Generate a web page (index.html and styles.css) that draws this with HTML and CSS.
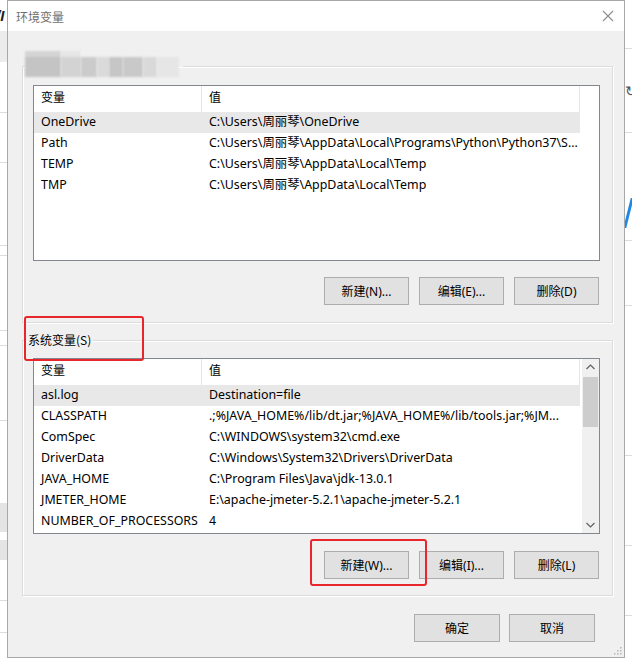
FILE: index.html
```html
<!DOCTYPE html>
<html lang="zh-CN">
<head>
<meta charset="utf-8">
<title>环境变量</title>
<link rel="stylesheet" href="styles.css">
</head>
<body>
<div class="screen">
  <div class="bg-left">
    <span class="bg-glyph">/I</span>
  </div>

  <div class="dialog">
    <div class="titlebar">
      <span class="title">环境变量</span>
      <svg class="close" width="12" height="12" viewBox="0 0 12 12" aria-label="关闭">
        <path d="M1 1 L11 11 M11 1 L1 11" stroke="#8c8c8c" stroke-width="1.1" fill="none"/>
      </svg>
    </div>

    <div class="dialog-body">
      <fieldset class="group group-user">
        <legend class="blur-label">
          <span class="bl b1"></span><span class="bl b2"></span><span class="bl b3"></span><span class="bl b4"></span><span class="bl b5"></span><span class="bl b6"></span><span class="bl b7"></span><span class="bl b8"></span>
        </legend>
        <div class="group-inner user-inner">
          <div class="list">
            <div class="list-main">
              <div class="cols head"><span class="cell">变量</span><span class="cell">值</span></div>
              <div class="cols row sel"><span class="cell">OneDrive</span><span class="cell">C:\Users\周丽琴\OneDrive</span></div>
              <div class="cols row"><span class="cell">Path</span><span class="cell">C:\Users\周丽琴\AppData\Local\Programs\Python\Python37\S...</span></div>
              <div class="cols row"><span class="cell">TEMP</span><span class="cell">C:\Users\周丽琴\AppData\Local\Temp</span></div>
              <div class="cols row"><span class="cell">TMP</span><span class="cell">C:\Users\周丽琴\AppData\Local\Temp</span></div>
            </div>
          </div>
          <div class="btn-row">
            <button class="btn">新建(N)...</button>
            <button class="btn">编辑(E)...</button>
            <button class="btn">删除(D)</button>
          </div>
        </div>
      </fieldset>

      <fieldset class="group group-sys">
        <legend class="group-title">系统变量(S)</legend>
        <div class="group-inner sys-inner">
          <div class="list">
            <div class="list-main">
              <div class="cols head"><span class="cell">变量</span><span class="cell">值</span></div>
              <div class="cols row sel"><span class="cell">asl.log</span><span class="cell">Destination=file</span></div>
              <div class="cols row"><span class="cell">CLASSPATH</span><span class="cell">.;%JAVA_HOME%/lib/dt.jar;%JAVA_HOME%/lib/tools.jar;%JM...</span></div>
              <div class="cols row"><span class="cell">ComSpec</span><span class="cell">C:\WINDOWS\system32\cmd.exe</span></div>
              <div class="cols row"><span class="cell">DriverData</span><span class="cell">C:\Windows\System32\Drivers\DriverData</span></div>
              <div class="cols row"><span class="cell">JAVA_HOME</span><span class="cell">C:\Program Files\Java\jdk-13.0.1</span></div>
              <div class="cols row"><span class="cell">JMETER_HOME</span><span class="cell">E:\apache-jmeter-5.2.1\apache-jmeter-5.2.1</span></div>
              <div class="cols row"><span class="cell">NUMBER_OF_PROCESSORS</span><span class="cell">4</span></div>
            </div>
            <div class="vscroll">
              <svg class="arrow" width="17" height="17" viewBox="0 0 17 17"><path d="M4.5 10 L8.5 6 L12.5 10" stroke="#606060" stroke-width="1.2" fill="none"/></svg>
              <div class="track"><div class="thumb"></div></div>
              <svg class="arrow" width="17" height="17" viewBox="0 0 17 17"><path d="M4.5 7 L8.5 11 L12.5 7" stroke="#606060" stroke-width="1.2" fill="none"/></svg>
            </div>
          </div>
          <div class="btn-row">
            <button class="btn">新建(W)...</button>
            <button class="btn">编辑(I)...</button>
            <button class="btn">删除(L)</button>
          </div>
        </div>
      </fieldset>

      <div class="actions">
        <button class="btn btn-wide">确定</button>
        <button class="btn btn-wide">取消</button>
      </div>
    </div>

    <svg class="grip" width="10" height="10" viewBox="0 0 10 10">
      <rect x="8" y="2" width="1.5" height="1.5" fill="#b5b5b5"/>
      <rect x="5" y="5" width="1.5" height="1.5" fill="#b5b5b5"/>
      <rect x="8" y="5" width="1.5" height="1.5" fill="#b5b5b5"/>
      <rect x="2" y="8" width="1.5" height="1.5" fill="#b5b5b5"/>
      <rect x="5" y="8" width="1.5" height="1.5" fill="#b5b5b5"/>
      <rect x="8" y="8" width="1.5" height="1.5" fill="#b5b5b5"/>
    </svg>
  </div>

  <div class="bg-right">
    <span class="bg-refresh">↻</span>
    <span class="bg-blue"></span>
  </div>
</div>

<div class="mark mark-1"></div>
<div class="mark mark-2"></div>
</body>
</html>
```

FILE: styles.css
```css
* { box-sizing: border-box; }

body {
  margin: 0;
  width: 632px;
  height: 666px;
  overflow: hidden;
  background: #fff;
  font-family: "Noto Sans", "Noto Sans CJK SC", sans-serif;
  font-size: 12px;
  color: #000;
  position: relative;
}

.screen {
  display: flex;
  height: 666px;
}

/* background window fragments */
.bg-left {
  width: 7px;
  flex: none;
  overflow: hidden;
  padding-top: 7px;
  background: linear-gradient(to bottom,
    #fff 0 31px, #ececec 31px 62px, #fff 62px 112px, #dcdcdc 112px 113px,
    #fff 113px 162px, #dcdcdc 162px 163px, #fff 163px 245px, #dcdcdc 245px 246px,
    #fff 246px 255px, #dcdcdc 255px 256px, #fff 256px 330px, #dcdcdc 330px 331px,
    #fff 331px 345px, #dcdcdc 345px 346px, #fff 346px 420px, #dcdcdc 420px 421px,
    #fff 421px 503px, #e4e4e4 503px 532px, #fff 532px 540px, #e4e4e4 540px 560px,
    #fff 560px 600px, #dcdcdc 600px 601px, #fff 601px 632px, #dcdcdc 632px 633px,
    #fff 633px);
}
.bg-glyph {
  display: block;
  margin-left: -4px;
  font-family: "Liberation Sans", sans-serif;
  font-weight: bold;
  font-style: italic;
  font-size: 15px;
  line-height: 18px;
  color: #222;
}
.bg-right {
  width: 7px;
  flex: none;
  overflow: hidden;
  padding-top: 82px;
  display: flex;
  flex-direction: column;
  background: linear-gradient(to bottom,
    #fff 0 48px, #dcdcdc 48px 49px, #fff 49px 132px, #dcdcdc 132px 133px,
    #fff 133px 240px, #dcdcdc 240px 241px, #fff 241px 305px, #dcdcdc 305px 306px,
    #fff 306px 455px, #dcdcdc 455px 456px, #fff 456px 545px, #dcdcdc 545px 546px,
    #fff 546px 615px, #dcdcdc 615px 616px, #fff 616px);
}
.bg-refresh {
  font-size: 14px;
  line-height: 18px;
  color: #555;
}
.bg-blue {
  display: block;
  margin-top: 98px;
  margin-left: 2px;
  width: 3px;
  height: 30px;
  background: #1e88e5;
  transform: skewX(-14deg);
}

/* dialog */
.dialog {
  width: 618px;
  height: 658px;
  flex: none;
  border: 1px solid #a8a8a8;
  background: #f0f0f0;
  display: flex;
  flex-direction: column;
  position: relative;
}
.titlebar {
  height: 30px;
  flex: none;
  background: #fff;
  display: flex;
  align-items: center;
  justify-content: space-between;
  padding: 0 10px 0 8px;
}
.title {
  font-family: "Noto Sans CJK SC", sans-serif;
  font-size: 12px;
  color: #707070;
}
.close { display: block; }

.dialog-body {
  flex: 1;
  padding: 19px 11px 15px 14px;
  display: flex;
  flex-direction: column;
}

.group {
  margin: 0;
  padding: 0;
  min-width: 0;
  border: 1px solid #dcdcdc;
  box-shadow: inset 1px 1px 0 #fff, 1px 1px 0 #fff;
}
.group-sys { margin-top: 9px; }

.blur-label {
  margin-left: 2px;
  padding: 0;
  width: 158px;
  height: 32px;
  display: flex;
  align-items: flex-start;
}
.bl {
  display: block;
  height: 26px;
  margin-top: 1px;
  filter: blur(1.2px);
}
.b1 { width: 36px; background: linear-gradient(#d4d4d4 0 6px, #c4c4c4 6px); }
.b2 { width: 20px; background: linear-gradient(#e6e6e6 0 6px, #d3d3d3 6px); }
.b3 { width: 16px; background: linear-gradient(#f0f0f0 0 6px, #cbcbcb 6px); }
.b4 { width: 12px; background: linear-gradient(#f0f0f0 0 6px, #dadada 6px); }
.b5 { width: 14px; background: linear-gradient(#f0f0f0 0 6px, #c6c6c6 6px); }
.b6 { width: 20px; background: linear-gradient(#f0f0f0 0 6px, #c9c9c9 6px); }
.b7 { width: 14px; background: linear-gradient(#f0f0f0 0 6px, #d9d9d9 6px); }
.b8 { width: 22px; background: linear-gradient(#f0f0f0 0 6px, #e6e6e6 6px); }

.group-title {
  margin-left: 3px;
  padding: 0 2px;
  line-height: 16px;
  font-family: "Noto Sans CJK SC", sans-serif;
}

.user-inner { padding: 3px 12px 17px 10px; }
.sys-inner { padding: 10px 12px 16px 10px; }

.list {
  width: 567px;
  height: 176px;
  background: #fff;
  border: 1px solid #828790;
  display: flex;
  overflow: hidden;
}
.list-main {
  flex: 1;
  min-width: 0;
}
.cols {
  display: grid;
  grid-template-columns: 168px 378px;
}
.head {
  height: 26px;
  line-height: 24px;
}
.head .cell { border-right: 1px solid #e5e5e5; }
.row {
  height: 21px;
  line-height: 20px;
  font-size: 12.4px;
}
.row.sel .cell { background: #e8e8e8; }
.cell {
  padding-left: 7px;
  white-space: nowrap;
  overflow: hidden;
}

.vscroll {
  width: 17px;
  flex: none;
  background: #f0f0f0;
  display: flex;
  flex-direction: column;
}
.arrow { display: block; flex: none; }
.track { flex: 1; padding: 1px 1px 0; }
.thumb {
  height: 50px;
  background: #cdcdcd;
}

.btn-row {
  margin-top: 16px;
  padding-right: 1px;
  display: flex;
  justify-content: flex-end;
  gap: 10px;
}
.sys-inner .btn-row { margin-top: 17px; }

.btn {
  width: 85px;
  height: 28px;
  margin: 0;
  padding: 0;
  background: #e1e1e1;
  border: 1px solid #adadad;
  border-radius: 0;
  font-family: "Noto Sans", "Noto Sans CJK SC", sans-serif;
  font-size: 12px;
  color: #000;
}

.actions {
  margin-top: 18px;
  padding-right: 18px;
  display: flex;
  justify-content: flex-end;
  gap: 9px;
}
.btn-wide { width: 86px; }

.grip {
  position: absolute;
  right: 2px;
  bottom: 2px;
}

/* red annotation boxes */
.mark {
  position: absolute;
  border: 2px solid #e8262b;
  border-radius: 3px;
}
.mark-1 { left: 24px; top: 316px; width: 120px; height: 45px; }
.mark-2 { left: 310px; top: 539px; width: 117px; height: 47px; }
```
